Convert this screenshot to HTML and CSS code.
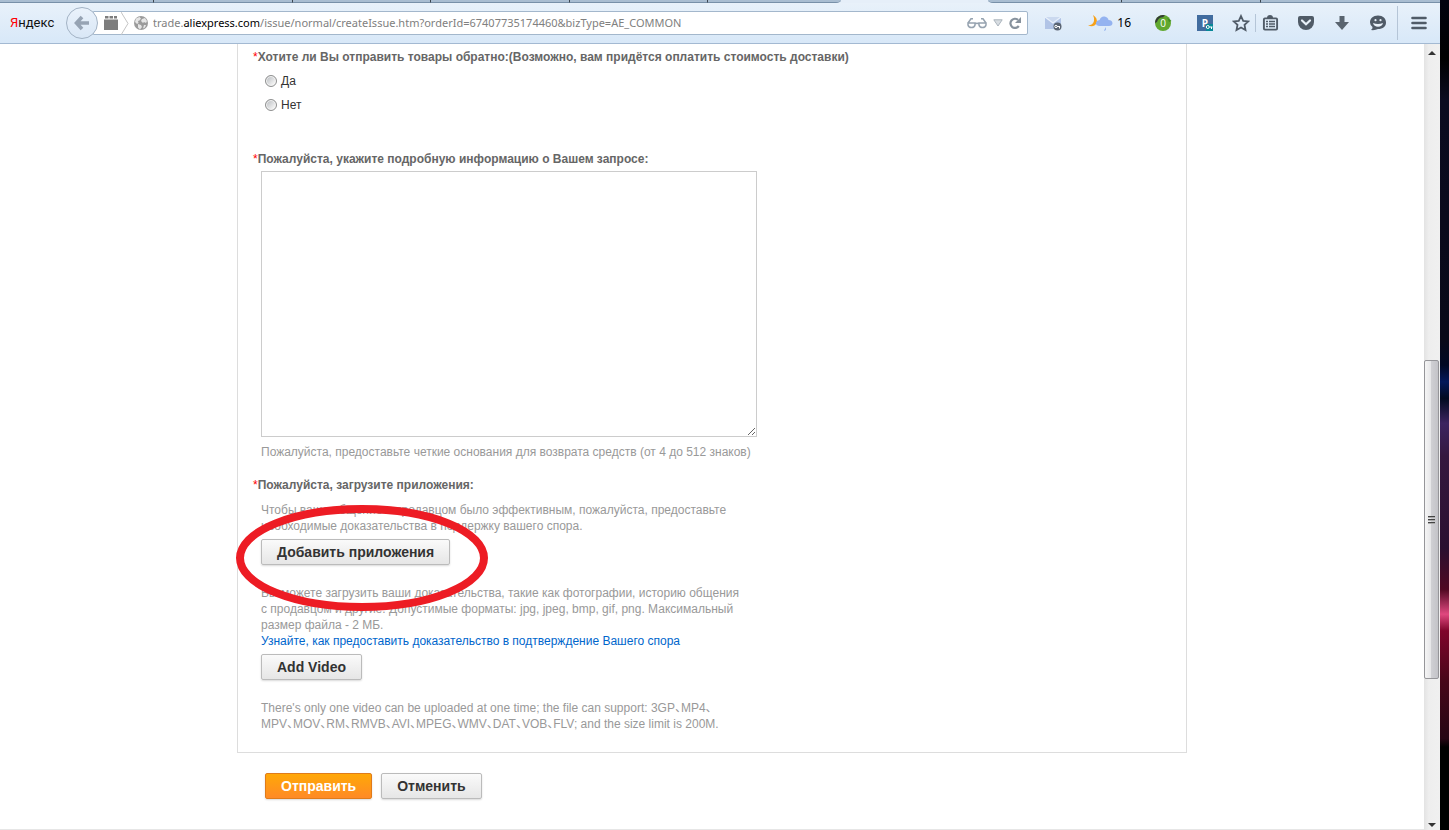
FILE: index.html
```
<!DOCTYPE html>
<html lang="ru">
<head>
    <meta charset="UTF-8">
    <meta name="viewport" content="width=device-width, initial-scale=1.0">
    <title>AliExpress - открыть спор</title>
    <link rel="stylesheet" href="styles.css">
</head>
<body>
    <div class="browser">
        <div class="tabs">
            <div class="tab"></div>
            <div class="tab"></div>
            <div class="tab"></div>
            <div class="tab"></div>
            <div class="tab"></div>
            <div class="tab tab-before"></div>
            <div class="tab active"></div>
            <div class="tab tab-after"></div>
            <div class="tab"></div>
            <div class="tab tab-last"></div>
        </div>

        <header class="toolbar">
            <a class="yandex" href="#"><span>Я</span>ндекс</a>
            <button class="back" type="button" aria-label="Назад">
                <svg width="16" height="16" viewBox="0 0 16 16"><path d="M8 2L2.500 8L8 14M3 8H15" fill="none" stroke="#96a3b3" stroke-width="3.600"/></svg>
            </button>
            <div class="address">
                <svg class="tab-groups" width="14" height="14" viewBox="0 0 14 14"><path d="M0 3.500h14V14H0zM1 0h3.500v2.500H1zM5.500 0H9v2.500H5.500zM10 0h3v2.500h-3z" fill="#7d7d7d"/></svg>
                <svg class="chevron" width="8" height="23" viewBox="0 0 8 23"><path d="M0 0L7 11.500L0 23" fill="none" stroke="#c4c4c4"/></svg>
                <svg class="globe" width="14" height="14" viewBox="0 0 14 14"><circle cx="7" cy="7" r="7" fill="#9b9b9b"/><path d="M2 2.500L5.500 1L7 2.500L5.500 4.500L4 5L4.500 7L3 8L1 6zM8 3l3-1 2 3-1 2-2-1-1 1-2-2zM4 8l3 1 1 2-2 2.500-2-2zM10 9l2 0-1 2.500-2 1z" fill="#e6e6e6"/></svg>
                <div class="url">trade.<b>aliexpress.com</b>/issue/normal/createIssue.htm?orderId=67407735174460&amp;bizType=AE_COMMON</div>
                <svg class="glasses" width="20" height="12" viewBox="0 0 20 12"><g fill="none" stroke="#96a3b0" stroke-width="1.500"><path d="M1 6H8V8Q7.500 10.500 4.500 10.500T1 8zM12 6H19V8Q18.500 10.500 15.500 10.500T12 8zM1 6L4 1.800H6M19 6L16 1.800H14M8 7Q10 5.500 12 7"/></g></svg>
                <svg class="history" width="10" height="8" viewBox="0 0 10 8"><path d="M.800 .800H9.200L5 7z" fill="#d8dde2" stroke="#abb4bd"/></svg>
                <svg class="reload" width="12" height="12" viewBox="0 0 12 12"><path d="M9.800 9A4.600 4.600 0 1 1 9 2.800" fill="none" stroke="#87929d" stroke-width="2.200"/><path d="M12 0V6H6z" fill="#87929d"/></svg>
            </div>

            <button class="tool mail" type="button" aria-label="Почта">
                <svg width="18" height="18" viewBox="0 0 18 18"><path d="M1 3h16v12H1z" fill="#b1c4e6"/><path d="M1 3l8 6 8-6z" fill="#cbd9ef"/><path d="M1 3l8 6 8-6" fill="none" stroke="#e9f1fb" stroke-width="1.200"/><circle cx="13.500" cy="12.500" r="4" fill="#5b6573"/><circle cx="12" cy="12.500" r="1.200" fill="none" stroke="#fff"/><path d="M13 12.500h3M15.500 12.500v2" stroke="#fff"/></svg>
            </button>
            <button class="weather" type="button">
                <svg width="26" height="18" viewBox="0 0 26 18"><path d="M6 1Q11 4 9.500 9Q7 14 1 11.500Q6 11 7 7Q7.500 4 6 1z" fill="#f6a11a"/><path d="M12 12Q8.500 11.500 9 8.500Q10 6 12.500 6Q14 2 17.500 2.500Q21 3 21.500 6Q25 6 25.500 9Q25.500 12 22 12z" fill="#94b3f0"/><path d="M19 13v2.500q-1 2-2 1z" fill="#94b3f0"/></svg>
                16
            </button>
            <button class="tool" type="button" aria-label="Счётчик">
                <svg width="18" height="18" viewBox="0 0 18 18"><circle cx="9" cy="9" r="8" fill="#60a82f"/><path d="M1 9A8 8 0 0 1 11 1.300L9 3.200A6.500 6.500 0 0 0 3 8z" fill="#343b35"/><path d="M13 3.500L17.500 7L15 8z" fill="#438d20"/><text x="9" y="13" class="counter">0</text></svg>
            </button>
            <button class="tool password" type="button" aria-label="Пароли">
                <svg width="16" height="16" viewBox="0 0 16 16"><path d="M0 0h16v16H0z" fill="#416c9f"/><text x="8" y="12" class="letter">P</text><path d="M9 9h7v7H9z" fill="#078898"/><circle cx="10.800" cy="12" r="1.500" fill="none" stroke="#fff"/><path d="M12.500 12H15.500M14.500 12v2" stroke="#fff"/></svg>
            </button>
            <button class="tool" type="button" aria-label="Закладки">
                <svg width="18" height="18" viewBox="0 0 18 18"><path d="M9 2L11.200 6.800L16.300 7.400L12.500 10.900L13.500 16L9 13.500L4.500 16L5.500 10.900L1.700 7.400L6.800 6.800z" fill="none" stroke="#505b67" stroke-width="1.800"/></svg>
            </button>
            <span class="divider"></span>
            <button class="tool" type="button" aria-label="Список закладок">
                <svg width="18" height="18" viewBox="0 0 18 18"><path d="M6 4Q6 1 9 1T12 4z" fill="#505b67"/><rect x="2.900" y="4.400" width="13.200" height="11.200" rx="1" fill="none" stroke="#505b67" stroke-width="1.900"/><path d="M5 7.500h2M8 7.500h6M5 10h2M8 10h6M5 12.500h2M8 12.500h6" stroke="#505b67" stroke-width="1.300"/></svg>
            </button>
            <button class="tool" type="button" aria-label="Pocket">
                <svg width="18" height="18" viewBox="0 0 18 18"><path d="M1 4Q1 2 3 2H15Q17 2 17 4V8A8 8 0 0 1 1 8z" fill="#505b67"/><path d="M5 6.500L9 10.300L13 6.500" fill="none" stroke="#e9f1f9" stroke-width="2.200" stroke-linecap="round"/></svg>
            </button>
            <button class="tool" type="button" aria-label="Загрузки">
                <svg width="18" height="18" viewBox="0 0 18 18"><path d="M6.500 2h5v6H16L9 16L2 8h4.500z" fill="#59646f"/></svg>
            </button>
            <button class="tool" type="button" aria-label="Чат">
                <svg width="18" height="18" viewBox="0 0 18 18"><path d="M9 1.500C14 1.500 17 4.500 17 8.500S14 15 9 15Q6 16.500 2 16Q4 14.500 3.500 13Q1 11 1 8.500C1 4.500 4 1.500 9 1.500z" fill="#505b67"/><circle cx="6.500" cy="6.200" r="1.100" fill="#e9f1f9"/><circle cx="11.500" cy="6.200" r="1.100" fill="#e9f1f9"/><path d="M4 9Q9 11 14 9Q13 12.800 9 12.800T4 9z" fill="#e9f1f9"/></svg>
            </button>
            <span class="divider tall"></span>
            <button class="tool menu" type="button" aria-label="Меню">
                <svg width="16" height="14" viewBox="0 0 16 14"><path d="M1.500 2h13M1.500 7h13M1.500 12h13" stroke="#505b67" stroke-width="2.600" stroke-linecap="round"/></svg>
            </button>
        </header>

        <div class="viewport">
            <main class="page">
                <form class="issue">
                    <div class="panel">
                        <fieldset class="return">
                            <legend class="title"><i>*</i>Хотите ли Вы отправить товары обратно:(Возможно, вам придётся оплатить стоимость доставки)</legend>
                            <label class="radio"><input type="radio" name="return" value="yes">Да</label>
                            <label class="radio"><input type="radio" name="return" value="no">Нет</label>
                        </fieldset>

                        <label class="title" for="details"><i>*</i>Пожалуйста, укажите подробную информацию о Вашем запросе:</label>
                        <div class="field">
                            <textarea id="details" name="details"></textarea>
                            <p class="hint">Пожалуйста, предоставьте четкие основания для возврата средств (от 4 до 512 знаков)</p>
                        </div>

                        <h3 class="title"><i>*</i>Пожалуйста, загрузите приложения:</h3>
                        <div class="field uploads">
                            <p>Чтобы ваше общение с продавцом было эффективным, пожалуйста, предоставьте<br>необходимые доказательства в поддержку вашего спора.</p>
                            <div class="attach">
                                <button class="btn" type="button">Добавить приложения</button>
                                <svg class="mark" width="254" height="108" viewBox="0 0 254 108"><ellipse cx="127" cy="54" rx="122" ry="49" fill="none" stroke="#ed1c24" stroke-width="8"/></svg>
                            </div>
                            <p>Вы можете загрузить ваши доказательства, такие как фотографии, историю общения<br>с продавцом и другие. Допустимые форматы: jpg, jpeg, bmp, gif, png. Максимальный<br>размер файла - 2 МБ.<br><a href="#">Узнайте, как предоставить доказательство в подтверждение Вашего спора</a></p>
                            <button class="btn" type="button">Add Video</button>
                            <p class="video-note">There's only one video can be uploaded at one time; the file can support: 3GP、MP4、<br>MPV、MOV、RM、RMVB、AVI、MPEG、WMV、DAT、VOB、FLV; and the size limit is 200M.</p>
                        </div>
                    </div>

                    <div class="actions">
                        <button class="btn primary" type="submit">Отправить</button>
                        <button class="btn" type="button">Отменить</button>
                    </div>
                </form>
            </main>

            <div class="scrollbar">
                <svg class="arrow" width="8" height="4" viewBox="0 0 8 4"><path d="M4 0L8 4H0z" fill="#333"/></svg>
                <div class="space-top"></div>
                <div class="thumb"><span></span><span></span><span></span></div>
                <div class="space-bottom"></div>
                <svg class="arrow" width="8" height="4" viewBox="0 0 8 4"><path d="M0 0H8L4 4z" fill="#333"/></svg>
            </div>
        </div>
    </div>
    <div class="desktop"></div>
</body>
</html>
```
FILE: styles.css
```
* {
    box-sizing: border-box;
}

body {
    margin: 0;
    display: flex;
    height: 100vh;
    overflow: hidden;
    font-family: "Liberation Sans", Arial, "Noto Sans CJK SC", sans-serif;
    font-size: 12px;
    line-height: 16px;
    color: #333;
    background-color: #fff;
}

button {
    font: inherit;
    cursor: pointer;
}

svg {
    display: block;
    flex: none;
}

.browser {
    flex: 1;
    min-width: 0;
    display: flex;
    flex-direction: column;
}

/* strip of another window behind the browser */
.desktop {
    flex: none;
    width: 9px;
    background: linear-gradient(#02020f 0%, #000 7%, #0b0b20 12%, #090918 41%, #000824 44%, #03185a 46%, #020a20 48%, #3d2460 51%, #35183f 55%, #2a1030 66%, #500822 71%, #e0487f 74%, #80052b 76%, #480719 82%, #260614 89%, #000 90%);
}

/* Tabs */
.tabs {
    flex: none;
    display: flex;
    height: 3px;
    background-color: #e6eff9;
}

.tab {
    flex: 138;
    border-right: 1px solid #3c4650;
    border-bottom: 1px solid #7890a8;
    background-color: #a9bdd1;
}

.tab:first-child {
    flex: 154;
}

.tab.tab-before {
    flex: 134;
    border-right: none;
    border-bottom-right-radius: 5px 3px;
}

.tab.active {
    flex: 147;
    border: none;
    background-color: #e6eff9;
}

.tab.tab-after {
    flex: 134;
    border-bottom-left-radius: 5px 3px;
}

.tab.tab-last {
    flex: 180;
    border-right: none;
}

/* Toolbar */
.toolbar {
    flex: none;
    display: flex;
    align-items: center;
    height: 41px;
    padding: 0 12px 0 10px;
    border-bottom: 1px solid #a3b9d2;
    background: linear-gradient(#e8f1fa, #d8e8f8);
}

.yandex {
    width: 56px;
    font-family: Roboto, "Open Sans", sans-serif;
    font-size: 13px;
    color: #111;
    text-decoration: none;
}

.yandex span {
    color: #f00;
}

.back {
    position: relative;
    flex: none;
    display: flex;
    align-items: center;
    justify-content: center;
    width: 32px;
    height: 32px;
    padding: 0;
    border: 1px solid #a3b3c5;
    border-radius: 50%;
    background: linear-gradient(#eaf2fb, #d9e7f6);
}

.address {
    flex: 1;
    min-width: 0;
    display: flex;
    align-items: center;
    height: 24px;
    margin-left: -5px;
    padding: 0 6px 0 10px;
    border: 1px solid #a3b7cc;
    border-radius: 0 2px 2px 0;
    background-color: #fff;
}

.chevron {
    margin: 0 5px 0 3px;
}

.url {
    flex: 1;
    min-width: 0;
    margin-left: 5px;
    overflow: hidden;
    white-space: nowrap;
    font-family: "Noto Sans", "Open Sans", sans-serif;
    font-size: 11px;
    color: #808080;
}

.url b {
    font-weight: normal;
    color: #000;
}

.history {
    margin: 0 6px;
}

.tool {
    flex: none;
    display: flex;
    align-items: center;
    justify-content: center;
    width: 18px;
    height: 18px;
    margin-left: 18px;
    padding: 0;
    border: none;
    background: none;
}

.mail {
    margin-left: 16px;
}

.weather {
    flex: none;
    display: flex;
    align-items: center;
    gap: 4px;
    margin: 0 5px 0 25px;
    padding: 0;
    border: none;
    background: none;
    font-family: "Noto Sans", "Open Sans", sans-serif;
    color: #000;
}

.password {
    margin-left: 24px;
}

.counter,
.letter {
    font-family: "Open Sans", sans-serif;
    font-size: 10px;
    text-anchor: middle;
    fill: #fff;
}

.letter {
    font-weight: bold;
}

.divider {
    flex: none;
    width: 1px;
    height: 18px;
    margin-left: 5px;
    background-color: #b5c5d7;
}

.divider + .tool {
    margin-left: 5px;
}

.divider.tall {
    height: 34px;
    margin-left: 10px;
}

.divider + .menu {
    margin-left: 12px;
}

/* Page */
.viewport {
    flex: 1;
    min-height: 0;
    display: flex;
}

.page {
    flex: 1;
    min-width: 0;
    overflow: hidden;
}

.issue {
    padding-bottom: 30px;
    border-bottom: 1px solid #e6e6e6;
}

.panel {
    max-width: 950px;
    margin: 0 auto;
    padding: 5px 15px 20px;
    border: 1px solid #ddd;
    border-top: none;
}

.title {
    display: block;
    margin: 0;
    padding: 0;
    font-size: 12px;
    font-weight: bold;
    color: #666;
}

.title i {
    font-style: normal;
    font-weight: normal;
    color: #f00;
}

.return {
    min-width: 0;
    margin: 0 0 34px;
    padding: 0;
    border: none;
}

.return .title {
    margin-bottom: 4px;
}

.radio {
    display: flex;
    align-items: center;
    gap: 4px;
    height: 24px;
    padding-left: 12px;
}

.radio input {
    appearance: none;
    width: 12px;
    height: 12px;
    margin: 0;
    border: 1px solid #8e8f8f;
    border-radius: 50%;
    background: linear-gradient(135deg, #b5b9bd, #f4f4f4 80%);
    box-shadow: inset 0 0 0 1px #f4f4f4;
}

.radio input:checked {
    background: #2a6fa8;
}

.field {
    padding: 4px 0 0 8px;
    color: #999;
}

.field p {
    margin: 0;
}

.field textarea {
    display: block;
    width: 496px;
    max-width: 100%;
    height: 266px;
    border: 1px solid #ccc;
    font: inherit;
    color: #333;
}

.field .hint {
    margin: 7px 0 17px;
}

.field a {
    color: #06c;
    text-decoration: none;
}

.uploads {
    padding-top: 9px;
}

.attach {
    position: relative;
    margin-bottom: 20px;
}

.btn {
    display: block;
    height: 26px;
    margin-top: 5px;
    padding: 0 15px;
    border: 1px solid #bbb;
    border-radius: 2px;
    background: linear-gradient(#fafafa, #e6e6e6);
    box-shadow: 0 1px 2px rgba(0, 0, 0, 0.15);
    font-family: "Liberation Sans", Arial, sans-serif;
    font-size: 14px;
    font-weight: bold;
    color: #333;
}

.btn:hover {
    background: #f2f2f2;
}

/* red ellipse drawn round the upload button */
.mark {
    position: absolute;
    top: -35px;
    left: -26px;
    pointer-events: none;
}

/* half-width list commas */
.field .video-note {
    margin-top: 20px;
    font-feature-settings: "halt";
}

.actions {
    display: flex;
    gap: 9px;
    max-width: 950px;
    margin: 20px auto 0;
    padding-left: 28px;
}

.actions .btn {
    margin-top: 0;
}

.btn.primary {
    border-color: #e07b1a;
    background: linear-gradient(#ffa807, #ff8a26);
    color: #fff;
}

/* Scrollbar */
.scrollbar {
    flex: none;
    display: flex;
    flex-direction: column;
    align-items: center;
    width: 16px;
    padding: 7px 1px 3px 0;
    background: linear-gradient(90deg, #e3e3e3, #eee 30%, #f0f0f0);
}

.space-top {
    flex: 306;
}

.thumb {
    flex: 318;
    display: flex;
    flex-direction: column;
    align-items: center;
    justify-content: center;
    gap: 1px;
    width: 15px;
    border: 1px solid #959599;
    border-radius: 2px;
    background: linear-gradient(90deg, #f5f5f5, #e6e6e8 45%, #cfcfd3 50%, #c3c3c8);
}

.thumb span {
    width: 7px;
    height: 2px;
    border-top: 1px solid #444;
    background-color: #aaa;
}

.space-bottom {
    flex: 144;
}
```
